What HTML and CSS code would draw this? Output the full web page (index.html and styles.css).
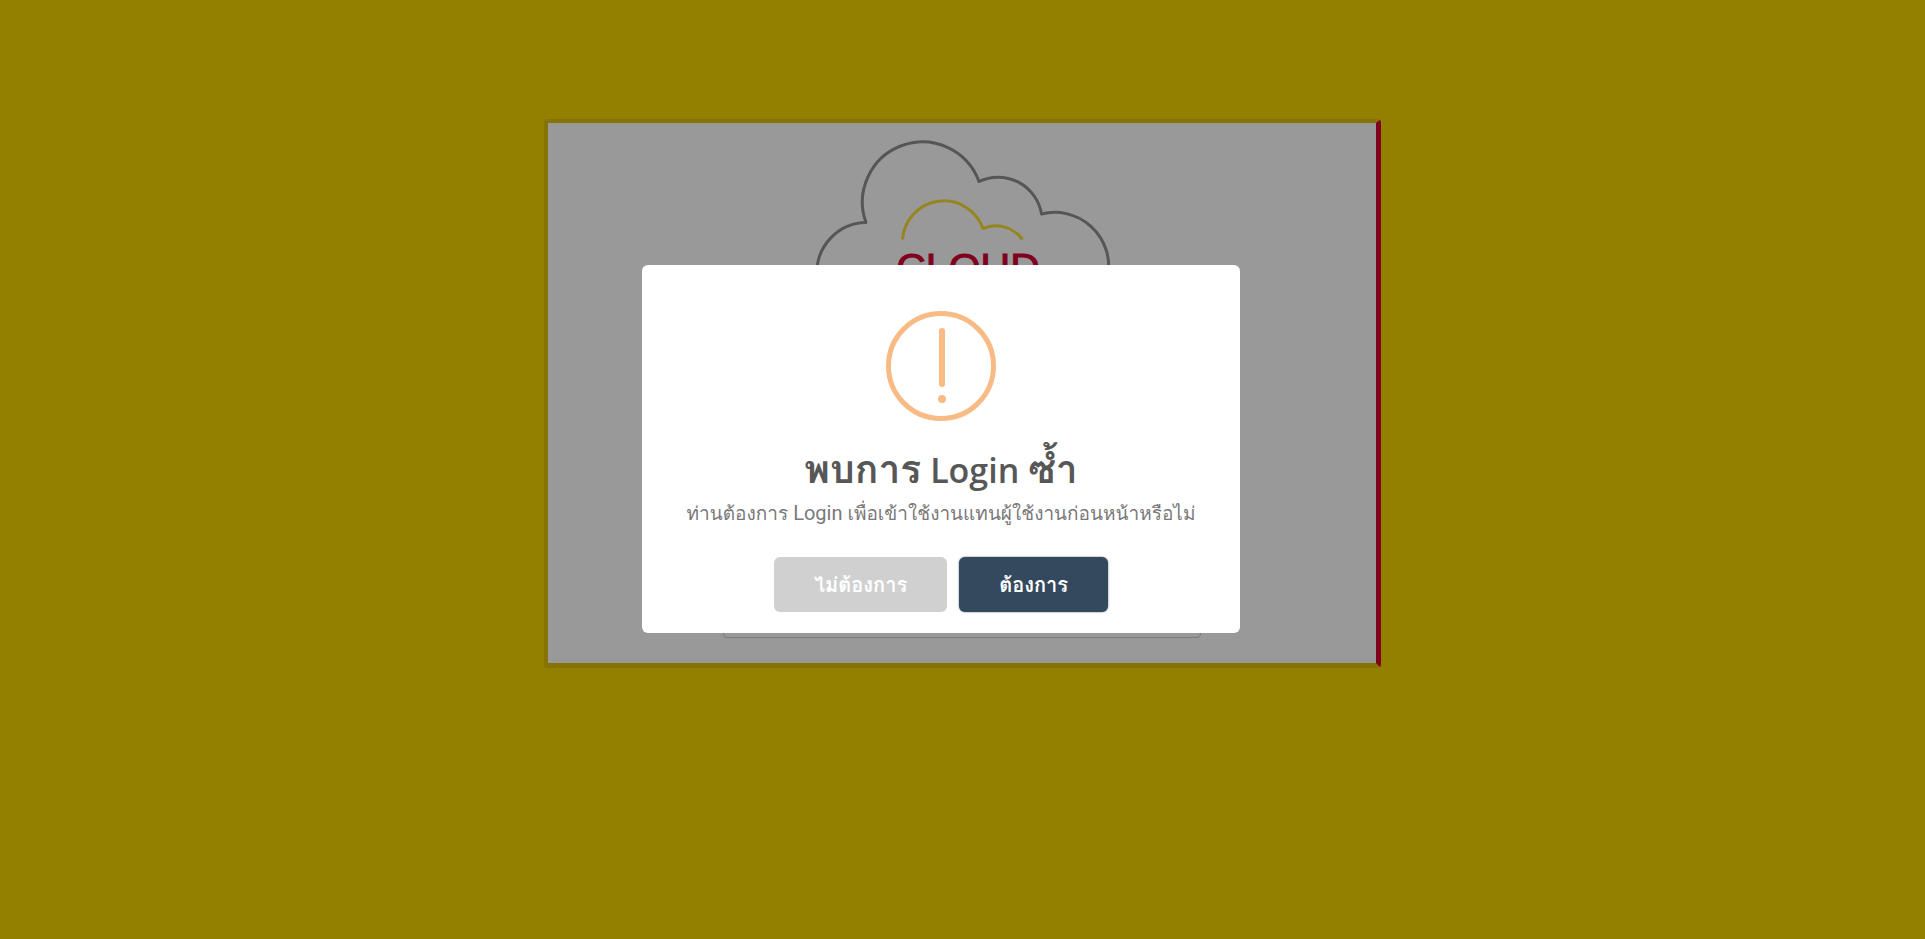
FILE: index.html
```html
<!DOCTYPE html>
<html lang="th">
<head>
<meta charset="utf-8">
<title>Login</title>
<link rel="stylesheet" href="styles.css">
</head>
<body>
<main class="page">
  <form class="card">
    <svg class="logo" viewBox="812 123 300 320" role="img" aria-label="CLOUD">
      <g fill="none" stroke-width="3" stroke-linejoin="round">
        <path stroke="#8f8f8f" d="M817 275A50 50 0 0 1 866 222.500A60 60 0 1 1 979 181.500A44 44 0 0 1 1041.500 214A54 54 0 0 1 1108 275"/>
        <path stroke="#f7d600" stroke-opacity=".8" d="M902.500 239.500A41.500 41.500 0 0 1 983 228.500A33 33 0 0 1 1022.500 239.500"/>
      </g>
      <text class="logo-text" x="968" y="282" text-anchor="middle">CLOUD</text>
    </svg>
    <input class="field" type="text" aria-label="Login">
  </form>
</main>
<div class="overlay">
  <section class="modal" role="alertdialog" aria-labelledby="title" aria-describedby="message">
    <svg class="warning" viewBox="0 0 110 110" aria-hidden="true">
      <circle cx="55" cy="55" r="52.500" fill="none" stroke="#f8bb86" stroke-width="5"/>
      <rect x="53" y="17" width="6" height="59" rx="3" fill="#f8bb86"/>
      <circle cx="56" cy="88" r="4" fill="#f8bb86"/>
    </svg>
    <h2 class="title" id="title">พบการ<span class="title-latin"> Login </span>ซ้ำ</h2>
    <p class="message" id="message">ท่านต้องการ<span class="message-latin"> Login </span>เพื่อเข้าใช้งานแทนผู้ใช้งานก่อนหน้าหรือไม่</p>
    <div class="actions">
      <button class="button cancel" type="button">ไม่ต้องการ</button>
      <button class="button confirm" type="button">ต้องการ</button>
    </div>
  </section>
</div>
</body>
</html>
```
FILE: styles.css
```css
* { box-sizing: border-box; }
body {
  margin: 0;
  min-height: 100vh;
  background: #f7d600;
  font-family: "Open Sans", "Loma", "Noto Sans Thai Looped", "Noto Sans Thai", "Noto Sans", sans-serif;
}
.page {
  display: flex;
  justify-content: center;
  padding: 119px 16px 0;
}
.card {
  display: flex;
  flex-direction: column;
  align-items: center;
  gap: 147px;
  width: 100%;
  max-width: 837px;
  padding-bottom: 25px;
  border: 4px solid #e2c008;
  border-right: 5px solid #d50032;
  border-bottom-width: 5px;
  border-radius: 4px;
  background: #fff;
}
.logo { width: 300px; height: 320px; }
.logo-text {
  font-family: "Liberation Sans", Arial, sans-serif;
  font-size: 41px;
  fill: #d50032;
  stroke: #d50032;
}
.field {
  width: 478px;
  max-width: 90%;
  height: 48px;
  border: 1px solid #ccc;
  border-radius: 4px;
  background: #fff;
}
.overlay {
  position: fixed;
  inset: 0;
  display: flex;
  align-items: center;
  justify-content: center;
  padding: 0 43px 41px 0;
  background: rgba(0, 0, 0, .4);
}
.modal {
  display: flex;
  flex-direction: column;
  align-items: center;
  width: 598px;
  padding: 46px 20px 21px;
  border-radius: 6px;
  background: #fff;
  text-align: center;
}
.warning { width: 110px; height: 110px; }
.title {
  margin: 22px 0 0;
  color: #575757;
  font-size: 39px;
  font-weight: 600;
  line-height: 50px;
}
.title-latin {
  font-size: 34px;
  line-height: 1;
}
.message {
  margin: 6px 0 0;
  color: #797979;
  font-family: "Loma", "Noto Sans Thai Looped", "Noto Sans Thai", sans-serif;
  font-size: 19px;
  line-height: 28px;
}
.message-latin {
  font-family: Roboto, sans-serif;
  font-size: 20px;
  line-height: 1;
}
.actions { display: flex; gap: 12px; margin-top: 30px; }
.button {
  height: 55px;
  padding: 0 40px;
  border: 0;
  border-radius: 6px;
  color: #fff;
  font-family: inherit;
  font-size: 20px;
  font-weight: 600;
}
.cancel { background: #d0d0d0; }
.confirm {
  background: #34495e;
  box-shadow: 0 0 2px rgba(52, 73, 94, .8);
}
```
